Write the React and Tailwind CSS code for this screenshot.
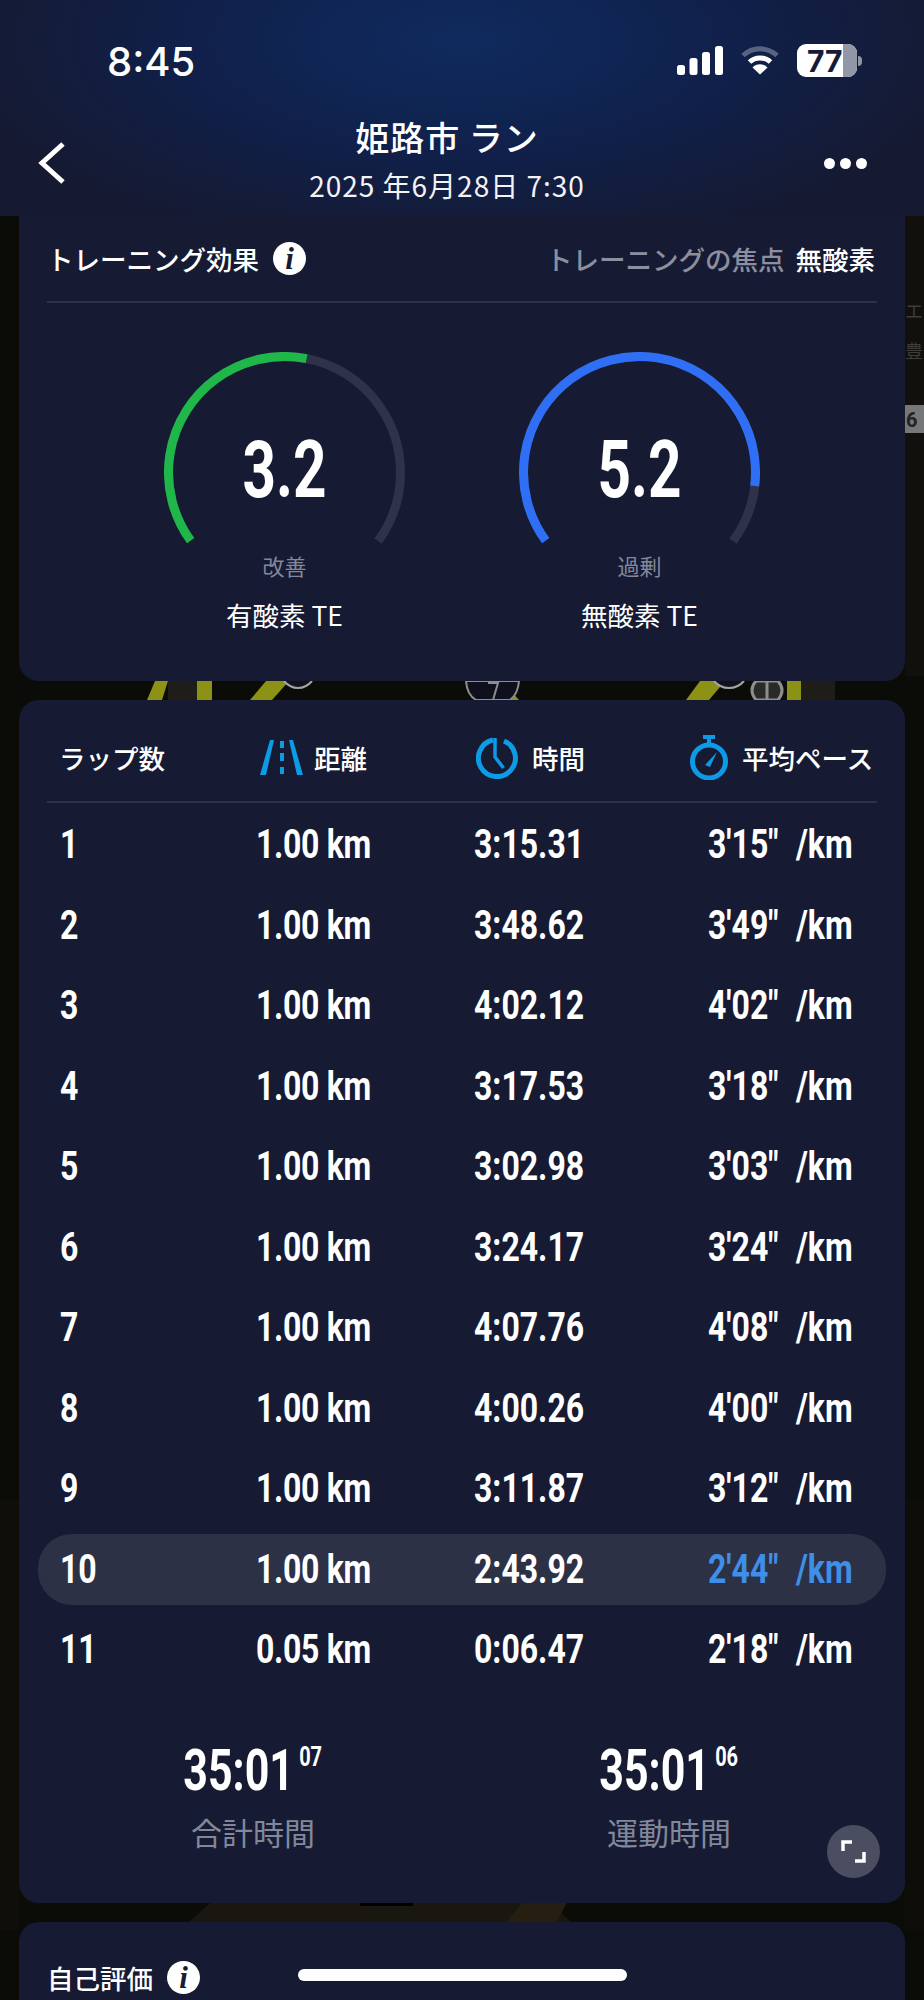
const cjk = "font-['Noto_Sans_CJK_JP','Noto_Sans',sans-serif]";
const figure = "font-['Roboto','Liberation_Sans',sans-serif]";
const tight = "inline-block origin-left scale-x-[.8] whitespace-nowrap";

const laps = [
  ["1", "1.00 km", "3:15.31", `3'15" /km`],
  ["2", "1.00 km", "3:48.62", `3'49" /km`],
  ["3", "1.00 km", "4:02.12", `4'02" /km`],
  ["4", "1.00 km", "3:17.53", `3'18" /km`],
  ["5", "1.00 km", "3:02.98", `3'03" /km`],
  ["6", "1.00 km", "3:24.17", `3'24" /km`],
  ["7", "1.00 km", "4:07.76", `4'08" /km`],
  ["8", "1.00 km", "4:00.26", `4'00" /km`],
  ["9", "1.00 km", "3:11.87", `3'12" /km`],
  ["10", "1.00 km", "2:43.92", `2'44" /km`],
  ["11", "0.05 km", "0:06.47", `2'18" /km`],
];

function Info() {
  return (
    <span className="flex h-[33px] w-[33px] items-center justify-center rounded-full bg-white">
      <span className="font-['Liberation_Serif',serif] text-[31px] font-bold italic leading-none text-[#161b33]">i</span>
    </span>
  );
}

// Three-quarter ring: 252 degrees of track, with the coloured share drawn on top.
function Gauge({ value, color, share, grade, label }) {
  const r = 116;
  const len = 2 * Math.PI * r * 0.7;
  return (
    <div className="flex w-[300px] flex-col items-center">
      <div className="relative h-[241px] w-[241px]">
        <svg width="241" height="241" viewBox="0 0 241 241" className="absolute inset-0">
          <g transform="rotate(144 120.5 120.5)" fill="none" strokeWidth="9">
            <circle cx="120.5" cy="120.5" r={r} stroke="#2e334a" strokeDasharray={`${len} 1000`} />
            <circle cx="120.5" cy="120.5" r={r} stroke={color} strokeDasharray={`${len * share} 1000`} />
          </g>
        </svg>
        <div className={`${figure} absolute inset-x-0 top-[70px] scale-x-[.73] text-center text-[80px] font-bold leading-[96px] text-white`}>{value}</div>
      </div>
      <div className={`${cjk} -mt-[43px] text-[22px] leading-[30px] text-[#83879a]`}>{grade}</div>
      <div className={`${cjk} mt-[17px] text-[26.500px] leading-[36px] text-white`}>{label}</div>
    </div>
  );
}

function RoadIcon() {
  return (
    <svg width="43" height="35" viewBox="0 0 43 35" fill="#0e9be6">
      <path d="M10 0h4L6 35H0z" />
      <path d="M29 0h4l10 35h-6z" />
      <rect x="20" y="1" width="4" height="7" />
      <rect x="20" y="13" width="4" height="8" />
      <rect x="20" y="27" width="4" height="7" />
    </svg>
  );
}

function ClockIcon() {
  return (
    <svg width="42" height="42" viewBox="0 0 42 42" fill="none" stroke="#0e9be6">
      <path d="M28 4A18.5 18.5 0 1 1 17 3" strokeWidth="5" />
      <path d="M19 1v19l8.5 11" strokeWidth="3.5" />
    </svg>
  );
}

function StopwatchIcon() {
  return (
    <svg width="38" height="45" viewBox="0 0 38 45" fill="none" stroke="#0e9be6">
      <circle cx="19" cy="26.5" r="16.5" strokeWidth="5" />
      <path d="M13 2h12M19 2v6" strokeWidth="4" />
      <path d="M15 30l12-13-7 15z" fill="#0e9be6" stroke="none" />
    </svg>
  );
}

// Satellite map that shows through between the cards.
function MapLayer() {
  return (
    <svg className="absolute inset-0" width="924" height="2000" viewBox="0 0 924 2000">
      <rect width="924" height="2000" fill="#0b0c07" />
      <rect x="905" y="216" width="19" height="460" fill="#11100c" />
      <rect x="0" y="1500" width="19" height="430" fill="#0f0e09" />
      <rect x="905" y="1500" width="19" height="430" fill="#0e0d08" />
      <path d="M180 1930l30-27h340l30 27z" fill="#1a1710" />
      <path d="M500 1930l22-27h45l-15 27z" fill="#251e11" />
      <rect x="360" y="1903" width="53" height="3" fill="#000" />
      <text x="905" y="318" fontSize="18" fill="#3f3e38" fontFamily="Noto Sans CJK JP">エ</text>
      <text x="905" y="358" fontSize="18" fill="#3f3e38" fontFamily="Noto Sans CJK JP">豊</text>
      <rect x="905" y="405" width="19" height="28" fill="#777" />
      <text x="906" y="427" fontSize="20" fontWeight="700" fill="#222" fontFamily="Roboto">6</text>
      <path d="M168 681h29v19h-29zM801 681h34v19h-34z" fill="#1f1d18" />
      <path d="M147 700l8-19h13l-6 19zM197 681h15v19h-15zM250 700l16-19h23l-17 19z" fill="#8b9216" />
      <path d="M686 700l14-19h25l-16 19zM787 681h14v19h-14zM510 690l9 10h-8z" fill="#8b9216" />
      <path d="M284 681q6 7 14 7t14-7" fill="#10121c" stroke="#a5a5a5" strokeWidth="2" />
      <path d="M714 681q6 7 15 7t15-7" fill="#10121c" stroke="#a5a5a5" strokeWidth="2" />
      <path d="M466 681q1 14 10 19h34q8-6 9-19z" fill="#0e111d" stroke="#8e8e8e" strokeWidth="2" />
      <path d="M488 683h10l-5 17" fill="none" stroke="#8e8e8e" strokeWidth="2" />
      <path d="M756 700q-8-10 0-19h22q8 9 0 19z" fill="#2a2a26" stroke="#8e8e8e" strokeWidth="3" />
      <path d="M767 681v19" stroke="#8e8e8e" strokeWidth="3" />
    </svg>
  );
}

export default function App() {
  return (
    <div className={`${cjk} relative h-[2000px] w-[924px] overflow-hidden text-white`}>
      <MapLayer />

      <div className="relative flex flex-col">
        {/* Top bar with status line */}
        <header className="h-[216px] bg-[radial-gradient(ellipse_500px_210px_at_50%_40px,#0f2b5e_0%,#10204a_55%,#151a32_100%)]">
          <div className="flex h-[92px] items-center justify-between pl-[107px] pr-[62px] pt-[32px]">
            <span className="font-['Inter',sans-serif] text-[40px] font-medium leading-[44px]">8:45</span>
            <div className="-mt-[3px] flex items-center gap-[18px]">
              <svg width="46" height="29" viewBox="0 0 46 29" fill="#fff">
                <rect x="0" y="19" width="8" height="10" rx="2.5" />
                <rect x="12.5" y="12" width="8" height="17" rx="2.5" />
                <rect x="25" y="6" width="8" height="23" rx="2.5" />
                <rect x="38" y="0" width="8" height="29" rx="2.5" />
              </svg>
              <svg width="38" height="29" viewBox="0 0 38 29" fill="none">
                <path d="M2 9.5A25 25 0 0 1 36 9.5" stroke="#56647f" strokeWidth="5" />
                <path d="M8.5 16A15.500 15.500 0 0 1 29.500 16" stroke="#fff" strokeWidth="5" />
                <path d="M19 28.500l-7.500-7a10.500 10.500 0 0 1 15 0z" fill="#fff" />
              </svg>
              <div className="flex items-center gap-[1px]">
                <div className="relative flex h-[33px] w-[60px] items-center overflow-hidden rounded-[9px] bg-white pl-[10px]">
                  <span className="absolute inset-y-0 right-0 w-[14px] bg-[#9297a8]" />
                  <span className="relative font-['Inter',sans-serif] text-[30px] font-bold leading-none text-[#141c3a]">77</span>
                </div>
                <span className="h-[10px] w-[4px] rounded-r-full bg-[#8f94a6]" />
              </div>
            </div>
          </div>
          <div className="relative mt-[21px] flex flex-col items-center pr-[30px]">
            <div className="text-[34px] font-medium leading-[48px] tracking-[1px]">姫路市 ラン</div>
            <div className="text-[28px] leading-[48px] tracking-[1px] text-[#f2f3f6]">2025 年6月28日 7:30</div>
            <svg width="28" height="42" viewBox="0 0 28 42" fill="none" stroke="#fff" strokeWidth="5" className="absolute left-[37px] top-[29px]">
              <path d="M26 2L5 21l21 19" />
            </svg>
            <div className="absolute right-[57px] top-[45px] flex gap-[5px]">
              <span className="h-[11px] w-[11px] rounded-full bg-white" />
              <span className="h-[11px] w-[11px] rounded-full bg-white" />
              <span className="h-[11px] w-[11px] rounded-full bg-white" />
            </div>
          </div>
        </header>

        <main className="flex flex-col gap-[19px] px-[19px]">
          {/* Training effect */}
          <section className="h-[465px] rounded-b-[20px] bg-[#161b33] px-[28px]">
            <div className="flex h-[87px] items-center justify-between border-b-2 border-[#2d3249] pr-[2px]">
              <div className="flex items-center gap-[14px] text-[26.500px] font-medium">
                トレーニング効果
                <Info />
              </div>
              <div className="flex items-center gap-[11px] text-[26.500px] font-medium">
                <span className="text-[#8c8f9f]">トレーニングの焦点</span>
                <span>無酸素</span>
              </div>
            </div>
            <div className="mt-[49px] flex justify-center gap-[55px]">
              <Gauge value="3.2" color="#1fb64a" share={0.543} grade="改善" label="有酸素 TE" />
              <Gauge value="5.2" color="#2f6ff5" share={0.883} grade="過剰" label="無酸素 TE" />
            </div>
          </section>

          {/* Lap table */}
          <section className="relative h-[1203px] rounded-[20px] bg-[#161b33] px-[28px]">
            <div className="flex h-[103px] items-center border-b-2 border-[#2d3249] pt-[14px] text-[26.500px] font-medium">
              <span className="ml-[12px] w-[201px]">ラップ数</span>
              <div className="flex w-[216px] items-center gap-[11px]"><RoadIcon />距離</div>
              <div className="flex w-[214px] items-center gap-[14px]"><ClockIcon />時間</div>
              <div className="flex items-center gap-[14px] whitespace-nowrap"><StopwatchIcon />平均ペース</div>
            </div>
            <div className="mt-[2px]">
              {laps.map((lap, i) => {
                const best = i === 9;
                return (
                  <div key={lap[0]} className="flex h-[80.500px] items-center">
                    <div className={`${figure} -mx-[9px] flex h-[71px] w-[848px] items-center rounded-[34px] pl-[22px] text-[40px] font-bold ${best ? "bg-[#2d3146]" : ""}`}>
                      <span className="w-[196px]"><span className={tight}>{lap[0]}</span></span>
                      <span className="w-[218px]"><span className={`${tight} tracking-[-0.4px]`}>{lap[1]}</span></span>
                      <span className="w-[234px]"><span className={tight}>{lap[2]}</span></span>
                      <span className={`w-[178px] ${best ? "text-[#3f8ee8]" : ""}`}><span className={`${tight} [word-spacing:12px]`}>{lap[3]}</span></span>
                    </div>
                  </div>
                );
              })}
            </div>
            <div className="-ml-[2px] mt-[44px] grid grid-cols-[416px_416px]">
              {[["合計時間", "07"], ["運動時間", "06"]].map(([name, cs]) => (
                <div key={name} className="flex flex-col items-center">
                  <div className={`${figure} flex scale-x-[.74] items-start font-bold`}>
                    <span className="text-[58px] leading-[70px]">35:01</span>
                    <span className="ml-[7px] mt-[8px] text-[27px] leading-[28px]">{cs}</span>
                  </div>
                  <div className="mt-[5px] text-[31px] leading-[44px] text-[#83879a]">{name}</div>
                </div>
              ))}
            </div>
            <div className="absolute bottom-[25px] right-[25px] flex h-[53px] w-[53px] items-center justify-center rounded-full bg-[#4a4e60]">
              <svg width="25" height="23" viewBox="0 0 25 23" fill="none" stroke="#fff" strokeWidth="3.500">
                <path d="M2 11V2h9M23 12v9h-9" />
              </svg>
            </div>
          </section>

          {/* Self assessment, continues below the fold */}
          <section className="h-[120px] rounded-t-[20px] bg-[#161b33] px-[28px]">
            <div className="flex items-center gap-[14px] pt-[36px] text-[26.500px] font-medium">
              自己評価
              <Info />
            </div>
          </section>
        </main>
      </div>

      {/* Home indicator */}
      <div className="absolute bottom-[19px] left-[298px] h-[12px] w-[329px] rounded-full bg-white" />
    </div>
  );
}
